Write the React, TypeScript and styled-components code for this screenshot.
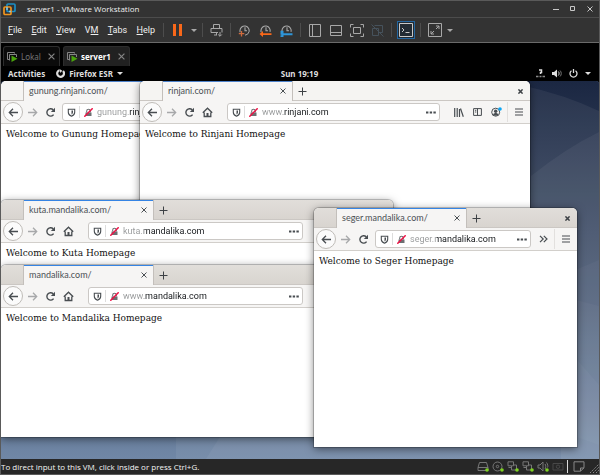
import React from 'react';
import styled, { createGlobalStyle, css } from 'styled-components';

const GlobalStyle = createGlobalStyle`
  * { box-sizing: border-box; }
  body { margin: 0; background: #000; font-family: "Noto Sans", "Open Sans", sans-serif; }
  button, input { font: inherit; color: inherit; padding: 0; margin: 0; border: 0; background: none; }
  button { display: flex; align-items: center; justify-content: center; }
  svg { display: block; flex: none; }
`;

const Workstation = styled.div`
  display: flex;
  flex-direction: column;
  min-height: 100vh;
  border: 1px solid #5a5a5a;
  background: #000;
  overflow: hidden;
`;

const TitleBar = styled.header`
  display: flex;
  align-items: center;
  height: 17px;
  padding: 0 1px 0 2px;
  gap: 11px;
  background: #333;
  color: #f0f0f0;
  border-bottom: 1px solid #4c4c4c;
  font: 8px/16px "Open Sans", sans-serif;
`;
const WindowTitle = styled.h1`
  flex: 1;
  margin: 0;
  font: inherit;
  white-space: nowrap;
`;
const Captions = styled.div`
  display: flex;
  color: #c8c8c8;
`;
const CaptionButton = styled.button`
  width: 17px;
  height: 15px;
`;

const MenuBar = styled.div`
  display: flex;
  align-items: center;
  height: 25px;
  background: #333;
  border-bottom: 1px solid #6a6a6a;
  color: #f0f0f0;
`;
const Menus = styled.nav`
  display: flex;
  justify-content: space-between;
  width: 162px;
  padding: 0 8px 0 7px;
  font: 9px/16px Roboto, sans-serif;
`;
const Mnemonic = styled.span`
  text-decoration: underline;
  text-underline-offset: 1px;
`;
const ToolGroup = styled.div<{ $pad?: number }>`
  display: flex;
  align-items: center;
  height: 18px;
  padding: 0 ${(p) => p.$pad ?? 3}px;
  color: #a8a8a8;
`;
const Divider = styled.span`
  width: 1px;
  height: 14px;
  background: #4d4d4d;
`;
const Tool = styled.button<{ $active?: boolean; $width?: number }>`
  width: ${(p) => p.$width ?? 21}px;
  height: 18px;
  ${(p) => p.$active && css`
    background: #222b33;
    border: 1px solid #2466a0;
    color: #c8c8c8;
  `}
`;

const TabRow = styled.div`
  display: flex;
  align-items: flex-end;
  gap: 3px;
  height: 23px;
  padding-left: 2px;
`;
const MachineTab = styled.div<{ $active?: boolean; $width: number }>`
  display: flex;
  align-items: center;
  gap: 4px;
  width: ${(p) => p.$width}px;
  height: 20px;
  padding: 0 4px 0 3px;
  border: 1px solid #2d2d2d;
  border-bottom: 0;
  border-radius: 3px 3px 0 0;
  background: ${(p) => (p.$active ? '#212121' : '#0b0b0b')};
  color: ${(p) => (p.$active ? '#fff' : '#757575')};
  font: ${(p) => (p.$active ? 700 : 400)} 8px/16px "Noto Sans", sans-serif;
`;
const TabLabel = styled.button`
  flex: 1;
  gap: 3px;
  justify-content: flex-start;
`;
const TabClose = styled.button`
  color: #858585;
`;

const GnomeBar = styled.div`
  display: grid;
  grid-template-columns: 1fr auto 1fr;
  align-items: center;
  height: 15px;
  padding: 0 8px 0 7px;
  color: #dedede;
  font: 700 8px/15px "Noto Sans", sans-serif;
`;
const BarSide = styled.div<{ $end?: boolean }>`
  display: flex;
  align-items: center;
  gap: ${(p) => (p.$end ? 7 : 11)}px;
  justify-content: ${(p) => (p.$end ? 'flex-end' : 'flex-start')};
`;
const BarButton = styled.button`
  gap: 4px;
  height: 15px;
`;

const Desktop = styled.main`
  position: relative;
  flex: 1;
  overflow: hidden;
  border-radius: 3px 3px 0 0;
  background: #53637f;
`;
const Wallpaper = styled.svg`
  position: absolute;
  inset: 0;
  width: 100%;
  height: 100%;
`;

const StatusBar = styled.footer`
  display: flex;
  align-items: center;
  justify-content: space-between;
  height: 15px;
  background: #272727;
  color: #f4f4f4;
  font: 8px/14px "Open Sans", sans-serif;
  white-space: nowrap;
`;
const Devices = styled.div`
  display: flex;
  align-items: center;
  gap: 2px;
`;
const DeviceButton = styled.button`
  width: 13px;
  height: 14px;
`;
const StatusRule = styled.span`
  width: 1px;
  height: 13px;
  margin: 0 2px 0 1px;
  background: #ddd;
`;

const Frame = styled.section<{ $x: number; $y: number; $w: number; $h: number }>`
  position: absolute;
  left: ${(p) => p.$x}px;
  top: ${(p) => p.$y}px;
  width: ${(p) => p.$w}px;
  height: ${(p) => p.$h}px;
  display: flex;
  flex-direction: column;
  overflow: hidden;
  background: #fff;
  border-radius: 5px 5px 0 0;
  box-shadow: 0 0 0 1px rgba(0, 0, 0, 0.2), 0 2px 9px rgba(0, 0, 0, 0.5);
`;
const TabStrip = styled.div<{ $light?: boolean }>`
  display: flex;
  align-items: stretch;
  height: 20px;
  background: ${(p) => (p.$light ? '#f5f4f2' : 'linear-gradient(#e1deda, #d8d4cf)')};
  color: #3d4145;
`;
const StripLead = styled.div`
  width: 22px;
  border-bottom: 1px solid #cbc7c3;
`;
const PageTab = styled.div<{ $light?: boolean }>`
  display: flex;
  align-items: center;
  justify-content: space-between;
  width: 131px;
  padding: 0 5px;
  background: linear-gradient(${(p) => (p.$light ? '#4e82cb' : '#3584e4')} 1px, #f6f5f4 1px);
  border: solid #c3bfbb;
  border-width: 0 1px;
  font: 9px/18px Lato, sans-serif;
  color: #4b5054;
`;
const StripTail = styled.div`
  display: flex;
  flex: 1;
  align-items: center;
  justify-content: space-between;
  padding: 2px 4px 0;
  border-bottom: 1px solid #cbc7c3;
`;
const IconButton = styled.button<{ $size?: number }>`
  width: ${(p) => p.$size ?? 11}px;
  height: ${(p) => p.$size ?? 11}px;
`;
const NavBar = styled.div`
  display: flex;
  align-items: center;
  height: 23px;
  padding: 0 4px 0 2px;
  background: #f6f5f4;
  border-bottom: 1px solid #d2cfcb;
  color: #484d51;
`;
const BackButton = styled.button`
  width: 20px;
  height: 20px;
  flex: none;
  border: 1px solid #bfbcb8;
  border-radius: 50%;
  background: #fbfbfb;
`;
const NavButton = styled.button<{ $faded?: boolean }>`
  width: 18px;
  height: 18px;
  flex: none;
  opacity: ${(p) => (p.$faded ? 0.45 : 1)};
`;
const SideButton = styled(NavButton)`
  width: 19px;
`;
const Address = styled.div<{ $compact?: boolean }>`
  display: flex;
  align-items: center;
  flex: 1;
  min-width: 0;
  height: 18px;
  margin: ${(p) => (p.$compact ? '0 3px' : '0 9px 0 11px')};
  padding: 0 3px 0 4px;
  border: 1px solid #cbc8c5;
  border-radius: 3px;
  background: #fff;
`;
const AddressRule = styled.span`
  width: 1px;
  height: 12px;
  margin: 0 4px 0 3px;
  background: #ddd;
`;
const AddressInput = styled.input<{ $dim: number }>`
  flex: 1;
  min-width: 0;
  height: 16px;
  margin-left: 4px;
  font: 9px/16px Roboto, sans-serif;
  background: linear-gradient(90deg, #969899 ${(p) => p.$dim}px, #14171a ${(p) => p.$dim}px);
  background-clip: text;
  -webkit-background-clip: text;
  -webkit-text-fill-color: transparent;
  outline: 0;
`;
const MenuRule = styled.span`
  width: 1px;
  height: 20px;
  margin: 0 4px 0 1px;
  background: #e2e0de;
`;
const Page = styled.p`
  margin: 0;
  padding: 3px 5px;
  color: #111;
  font: 9px/14px "DejaVu Serif", serif;
  white-space: nowrap;
`;

type IconProps = { w?: number; h?: number; box?: string; children: React.ReactNode };
const Icon = ({ w = 11, h = w, box = `0 0 ${w} ${h}`, children }: IconProps) => (
  <svg width={w} height={h} viewBox={box} fill="none" stroke="currentColor" aria-hidden="true">
    {children}
  </svg>
);

const Caret = ({ w = 6 }: { w?: number }) => (
  <Icon w={w} h={3} box="0 0 6 3"><path d="M0 0h6L3 3z" fill="currentColor" stroke="none" /></Icon>
);
const CloseIcon = ({ size = 6, weight = 1 }: { size?: number; weight?: number }) => (
  <Icon w={size} box="0 0 6 6"><path d="M.5.5l5 5M5.5.5l-5 5" strokeWidth={weight} /></Icon>
);
const VmLogo = () => (
  <Icon w={13} box="0 0 13 13">
    <rect x="4" y="1" width="8" height="7.5" rx="1" stroke="#1c8fc5" strokeWidth="1.7" />
    <rect x="1" y="4" width="7" height="7.5" rx="1" stroke="#f0951e" strokeWidth="1.7" />
    <path d="M4 7V4M8 8.5H6" stroke="#8fc2da" strokeWidth="1.5" />
  </Icon>
);
const Clock = ({ children }: { children: React.ReactNode }) => (
  <Icon w={13}>
    <path d="M2 8.2V6.3a4.6 4.6 0 1 1 9 1.6M7 3.2V6.8H9" strokeWidth="1.1" />
    {children}
  </Icon>
);
const MachineIcon = () => (
  <Icon w={11} h={10}>
    <path d="M2.5 7.5h-2v-7h7v1M2.5 8.500V2.500h7V5" stroke="#858585" />
    <path d="M4.500 3.500l6 3.200-6 3.300z" fill="#4aa40c" stroke="none" />
  </Icon>
);
const ShieldIcon = () => (
  <Icon w={9} box="0 0 9 9">
    <path d="M1.300 1.200h6.400v3c0 2-1.400 3.300-3.200 4C2.700 7.500 1.300 6.200 1.300 4.200z" strokeWidth="1.100" />
    <path d="M4.500 2.600v4C5.500 6 6 5.200 6 4V2.600z" fill="currentColor" stroke="none" />
  </Icon>
);
const LockIcon = () => (
  <Icon w={9} box="0 0 9 9">
    <path d="M1.500 4.500h6V8h-6z" fill="#6c6f72" stroke="none" />
    <path d="M2.700 4.500V3a1.800 1.800 0 0 1 3.600 0v1.500" stroke="#6c6f72" strokeWidth="1.100" />
    <path d="M.3 8.700L8.700.3" stroke="#ee1144" strokeWidth="1.500" />
  </Icon>
);

type BrowserProps = {
  x: number; y: number; w: number; h: number;
  tab: string; prefix: string; domain: string; dim: number; message: string;
  light?: boolean; compact?: boolean;
};

const BrowserWindow = ({ x, y, w, h, tab, prefix, domain, dim, message, light, compact }: BrowserProps) => (
  <Frame $x={x} $y={y} $w={w} $h={h} aria-label={tab}>
    <TabStrip $light={light}>
      <StripLead />
      <PageTab $light={light}>
        <span>{tab}</span>
        <IconButton $size={8} aria-label="Close tab"><CloseIcon /></IconButton>
      </PageTab>
      <StripTail>
        <IconButton aria-label="New tab"><Icon w={9}><path d="M4.500 .5v8M.5 4.500h8" /></Icon></IconButton>
        <IconButton aria-label="Close window"><CloseIcon size={5} weight={1.800} /></IconButton>
      </StripTail>
    </TabStrip>
    <NavBar>
      <BackButton aria-label="Back">
        <Icon w={11}><path d="M10 5.500H1.500M5 1.800L1.300 5.500 5 9.200" strokeWidth="1.300" /></Icon>
      </BackButton>
      <NavButton $faded aria-label="Forward">
        <Icon w={11}><path d="M1 5.500h8.500M6 1.800l3.700 3.700L6 9.200" strokeWidth="1.300" /></Icon>
      </NavButton>
      <NavButton aria-label="Reload">
        <Icon w={11}>
          <path d="M8.600 7.600A3.700 3.700 0 1 1 8.200 2.800" strokeWidth="1.400" />
          <path d="M10 .8v4.200H5.800z" fill="currentColor" stroke="none" />
        </Icon>
      </NavButton>
      {!compact && (
        <NavButton aria-label="Home">
          <Icon w={11}>
            <path d="M.8 5.800L5.500 1.200l4.700 4.600M2.200 5.500v4h6.600v-4" strokeWidth="1.300" />
            <path d="M4.500 6h2v3.500h-2z" fill="currentColor" stroke="none" />
          </Icon>
        </NavButton>
      )}
      <Address $compact={compact}>
        <ShieldIcon />
        <AddressRule />
        <LockIcon />
        <AddressInput $dim={dim} aria-label="Address" defaultValue={prefix + domain} />
        <IconButton aria-label="Page actions">
          <Icon w={10} h={3}>
            <path d="M0 1.500h2.400M3.700 1.500h2.400M7.400 1.500h2.400" strokeWidth="2" />
          </Icon>
        </IconButton>
      </Address>
      {compact ? (
        <SideButton aria-label="More tools">
          <Icon w={9} h={8}><path d="M1 .8L4.200 4 1 7.200M4.800 .8L8 4 4.800 7.200" strokeWidth="1.200" /></Icon>
        </SideButton>
      ) : (
        <>
          <SideButton aria-label="Library">
            <Icon w={10} h={9}><path d="M.7 0v9M3.200 0v9M5.500 1v8M6.500 .5L9.300 8.800" strokeWidth="1.200" /></Icon>
          </SideButton>
          <SideButton aria-label="Sidebars">
            <Icon w={9} h={8}><path d="M.6.6h7.800v6.800H.6zM4.500.5v7M2 2.300h1.300M2 4h1.300" strokeWidth="1" /></Icon>
          </SideButton>
          <SideButton aria-label="Account">
            <Icon w={11} h={10}>
              <circle cx="4.700" cy="5.200" r="4" />
              <circle cx="4.700" cy="4.200" r="1.700" fill="currentColor" stroke="none" />
              <path d="M2 7.600c1-2 4.400-2 5.400 0-1 1.500-4.400 1.500-5.400 0z" fill="currentColor" stroke="none" />
              <circle cx="9" cy="2" r="1.800" fill="#0aa6f5" stroke="none" />
            </Icon>
          </SideButton>
        </>
      )}
      <MenuRule />
      <IconButton $size={14} aria-label="Menu">
        <Icon w={8} h={8}><path d="M0 1h8M0 4h8M0 7h8" strokeWidth="1.200" /></Icon>
      </IconButton>
    </NavBar>
    <Page>{message}</Page>
  </Frame>
);

const menus: [string, string, string][] = [
  ['', 'F', 'ile'], ['', 'E', 'dit'], ['', 'V', 'iew'], ['V', 'M', ''], ['', 'T', 'abs'], ['', 'H', 'elp'],
];

const GreenDot = () => <circle cx="10" cy="9" r="1.800" fill="#7fd321" stroke="none" />;

export default function App() {
  return (
    <>
      <GlobalStyle />
      <Workstation>
        <TitleBar>
          <VmLogo />
          <WindowTitle>server1 - VMware Workstation</WindowTitle>
          <Captions>
            <CaptionButton aria-label="Minimize"><Icon w={6}><path d="M0 3.500h6" /></Icon></CaptionButton>
            <CaptionButton aria-label="Maximize"><Icon w={6}><path d="M.5.5h4v4h-4z" /></Icon></CaptionButton>
            <CaptionButton aria-label="Close"><CloseIcon /></CaptionButton>
          </Captions>
        </TitleBar>

        <MenuBar>
          <Menus>
            {menus.map(([before, key, after]) => (
              <button key={key}><span>{before}<Mnemonic>{key}</Mnemonic>{after}</span></button>
            ))}
          </Menus>
          <Divider />
          <ToolGroup>
            <Tool aria-label="Suspend">
              <Icon w={9} h={12}><path d="M1.500 0v12M7.500 0v12" stroke="#f9681a" strokeWidth="3" /></Icon>
            </Tool>
            <Tool $width={11} aria-label="Power options"><Caret /></Tool>
          </ToolGroup>
          <Divider />
          <ToolGroup>
            <Tool aria-label="Send Ctrl+Alt+Del">
              <Icon w={13}>
                <path d="M3.500 4.500v-4h6v4M8 8.500H1v-4h11v4M6.500 9v2M4 11h3M10 8v4M8.200 10.500L10 12.300l1.800-1.800" />
              </Icon>
            </Tool>
          </ToolGroup>
          <Divider />
          <ToolGroup>
            <Tool aria-label="Take snapshot">
              <Clock><path d="M3.500 7v5.500M.8 9.700h5.500" stroke="#d06a3c" strokeWidth="1.300" /><path d="M7 11.200a4.600 4.600 0 0 0 4-3.400" /></Clock>
            </Tool>
            <Tool aria-label="Revert snapshot">
              <Clock><path d="M.5 10l3.500-3v2.200h8.500v1.800H4V13z" fill="#f9681a" stroke="none" /></Clock>
            </Tool>
            <Tool aria-label="Manage snapshots">
              <Clock><path d="M.5 7.800h2v2h-2M.5 12.300h2v-1.800M2.500 10.200h10" stroke="#2e95d8" strokeWidth="2" /></Clock>
            </Tool>
          </ToolGroup>
          <Divider />
          <ToolGroup>
            <Tool aria-label="Show library">
              <Icon w={12} h={13}><path d="M.5.5h11v12H.5zM3.500.5v12" /></Icon>
            </Tool>
            <Tool aria-label="Show thumbnails">
              <Icon w={12} h={13}><path d="M.5 1.500h11v10H.5zM.5 8.500h11" /></Icon>
            </Tool>
            <Tool aria-label="Full screen">
              <Icon w={14} h={13}>
                <path d="M.5 3.500v-3h3M10.500.5h3v3M13.500 9.500v3h-3M3.500 12.500h-3v-3M3.500 3.500h7v6h-7z" />
              </Icon>
            </Tool>
            <Tool aria-label="Unity" disabled>
              <Icon w={13}>
                <path d="M3.500 1.500h8v7h-3M1.500 4.500h6v7h-6zM.5.5l12 12" stroke="#46525c" />
              </Icon>
            </Tool>
          </ToolGroup>
          <Divider />
          <ToolGroup $pad={5}>
            <Tool $active $width={18} aria-label="Console view">
              <Icon w={14}><path d="M.5.5h13v13H.5z" /><path d="M3 5l2 2-2 2M6.500 9.500h4" /></Icon>
            </Tool>
          </ToolGroup>
          <Divider />
          <ToolGroup>
            <Tool aria-label="Stretch guest">
              <Icon w={14}>
                <path d="M.5.5h13v13H.5zM8 6l3-3M8 3h3v3M6 8l-3 3M3 8v3h3" />
              </Icon>
            </Tool>
            <Tool $width={10} aria-label="Stretch options"><Caret /></Tool>
          </ToolGroup>
        </MenuBar>

        <TabRow>
          <MachineTab $width={57}>
            <TabLabel><MachineIcon />Lokal</TabLabel>
            <TabClose aria-label="Close Lokal"><CloseIcon size={7} /></TabClose>
          </MachineTab>
          <MachineTab $width={67} $active>
            <TabLabel><MachineIcon />server1</TabLabel>
            <TabClose aria-label="Close server1"><CloseIcon size={7} /></TabClose>
          </MachineTab>
        </TabRow>

        <GnomeBar>
          <BarSide>
            <BarButton>Activities</BarButton>
            <BarButton>
              <Icon w={9}>
                <path d="M3.500 1.200a3.400 3.400 0 1 0 3.500.8" strokeWidth="2.200" />
                <path d="M3.500 0l2.800 1.800-2 2.200z" fill="currentColor" stroke="none" />
              </Icon>
              <span>Firefox ESR</span>
              <Caret />
            </BarButton>
          </BarSide>
          <BarButton>Sun 19:19</BarButton>
          <BarSide $end>
            <BarButton aria-label="Network">
              <Icon w={9} h={9}>
                <path d="M3 1h2.500v2.500H4.500V5" strokeWidth="1.500" />
                <path d="M0 7.500h2.500M6.500 7.500H9M3.500 7.500h2" strokeWidth="1.500" stroke="#8a8a8a" />
              </Icon>
            </BarButton>
            <BarButton aria-label="Volume">
              <Icon w={10} h={9}>
                <path d="M0 3h2l3-2.500v8L2 6H0z" fill="currentColor" stroke="none" />
                <path d="M6.300 2.500c1 1 1 3 0 4" />
                <path d="M8 1.500c1.700 1.500 1.700 4.500 0 6" stroke="#777" />
              </Icon>
            </BarButton>
            <BarButton aria-label="Power">
              <Icon w={9}><path d="M2.500 1.700a3.500 3.500 0 1 0 4 0M4.500 0v4" strokeWidth="1.300" /></Icon>
            </BarButton>
            <BarButton aria-label="System menu"><Caret /></BarButton>
          </BarSide>
        </GnomeBar>

        <Desktop>
          <Wallpaper viewBox="0 0 598 378" preserveAspectRatio="none" aria-hidden="true">
            <defs>
              <linearGradient id="sky" x1="0" y1="0" x2="0" y2="1">
                <stop offset="0" stopColor="#1b2742" />
                <stop offset="0.3" stopColor="#35435c" />
                <stop offset="0.6" stopColor="#4a5b77" />
                <stop offset="1" stopColor="#7087a6" />
              </linearGradient>
            </defs>
            <path d="M0 0h598v378H0z" fill="url(#sky)" />
            <path d="M520 4q45 10 78 26v348H175v-28l345-260z" fill="#fff" fillOpacity="0.06" />
            <path d="M530 95q35-28 68-44v327H205l15-24L530 200z" fill="#fff" fillOpacity="0.05" />
            <path d="M560 195l38-16v199h-38z" fill="#fff" fillOpacity="0.03" />
            <path d="M560 215l38 10v153h-38z" fill="#fff" fillOpacity="0.03" />
            <path d="M570 272l28 32v60l-28-10z" fill="#fff" fillOpacity="0.03" />
          </Wallpaper>
          <BrowserWindow x={0} y={0} w={263} h={150} tab="gunung.rinjani.com/" prefix="gunung." domain="rinjani.com" dim={32} message="Welcome to Gunung Homepage" light compact />
          <BrowserWindow x={139} y={0} w={390} h={300} tab="rinjani.com/" prefix="www." domain="rinjani.com" dim={21} message="Welcome to Rinjani Homepage" light />
          <BrowserWindow x={0} y={119} w={392} h={170} tab="kuta.mandalika.com/" prefix="kuta." domain="mandalika.com" dim={21} message="Welcome to Kuta Homepage" />
          <BrowserWindow x={0} y={184} w={392} h={172} tab="mandalika.com/" prefix="www." domain="mandalika.com" dim={21} message="Welcome to Mandalika Homepage" />
          <BrowserWindow x={313} y={127} w={263} h={239} tab="seger.mandalika.com/" prefix="seger." domain="mandalika.com" dim={26} message="Welcome to Seger Homepage" compact />
        </Desktop>

        <StatusBar>
          <span>To direct input to this VM, click inside or press Ctrl+G.</span>
          <Devices>
            <DeviceButton aria-label="Hard disk">
              <Icon w={12} h={11}><path d="M1 6.500l1.500-5h7l1.500 5v3H1zM1 6.500h10" stroke="#777" /><GreenDot /></Icon>
            </DeviceButton>
            <DeviceButton aria-label="CD drive">
              <Icon w={12} h={11}><circle cx="5.500" cy="5.500" r="4.500" stroke="#777" /><circle cx="5.500" cy="5.500" r="1.200" stroke="#777" /><GreenDot /></Icon>
            </DeviceButton>
            <DeviceButton aria-label="Network adapter">
              <Icon w={12} h={11}><path d="M1 .8h5.500v4H1zM4.500 5v4h5V4h-3M1.500 6.500h3" stroke="#777" /><GreenDot /></Icon>
            </DeviceButton>
            <DeviceButton aria-label="Network adapter 2">
              <Icon w={12} h={11}><path d="M1 .8h5.500v4H1zM4.500 5v4h5V4h-3M1.500 6.500h3" stroke="#777" /><GreenDot /></Icon>
            </DeviceButton>
            <DeviceButton aria-label="Sound">
              <Icon w={12} h={11}><path d="M1 4h2l3-3v9L3 7H1zM8 3c1 1 1 4 0 5M9.500 1.500c1.500 2 1.500 4 1 5" stroke="#777" /><GreenDot /></Icon>
            </DeviceButton>
            <DeviceButton aria-label="Camera">
              <Icon w={12} h={11}><path d="M1 2.500h10v6.500H1z" stroke="#484848" /><circle cx="6" cy="5.700" r="1.700" stroke="#484848" /></Icon>
            </DeviceButton>
            <StatusRule />
            <DeviceButton aria-label="Messages">
              <Icon w={12} h={11}><path d="M1 .8h10v6L7.500 10.200H1zM7.500 10V7H11" stroke="#888" /></Icon>
            </DeviceButton>
            <Icon w={12} h={13}><path d="M3 13L12 4M6 13l6-6M9 13l3-3" stroke="#8a8a8a" strokeDasharray="1.500 1" /></Icon>
          </Devices>
        </StatusBar>
      </Workstation>
    </>
  );
}
